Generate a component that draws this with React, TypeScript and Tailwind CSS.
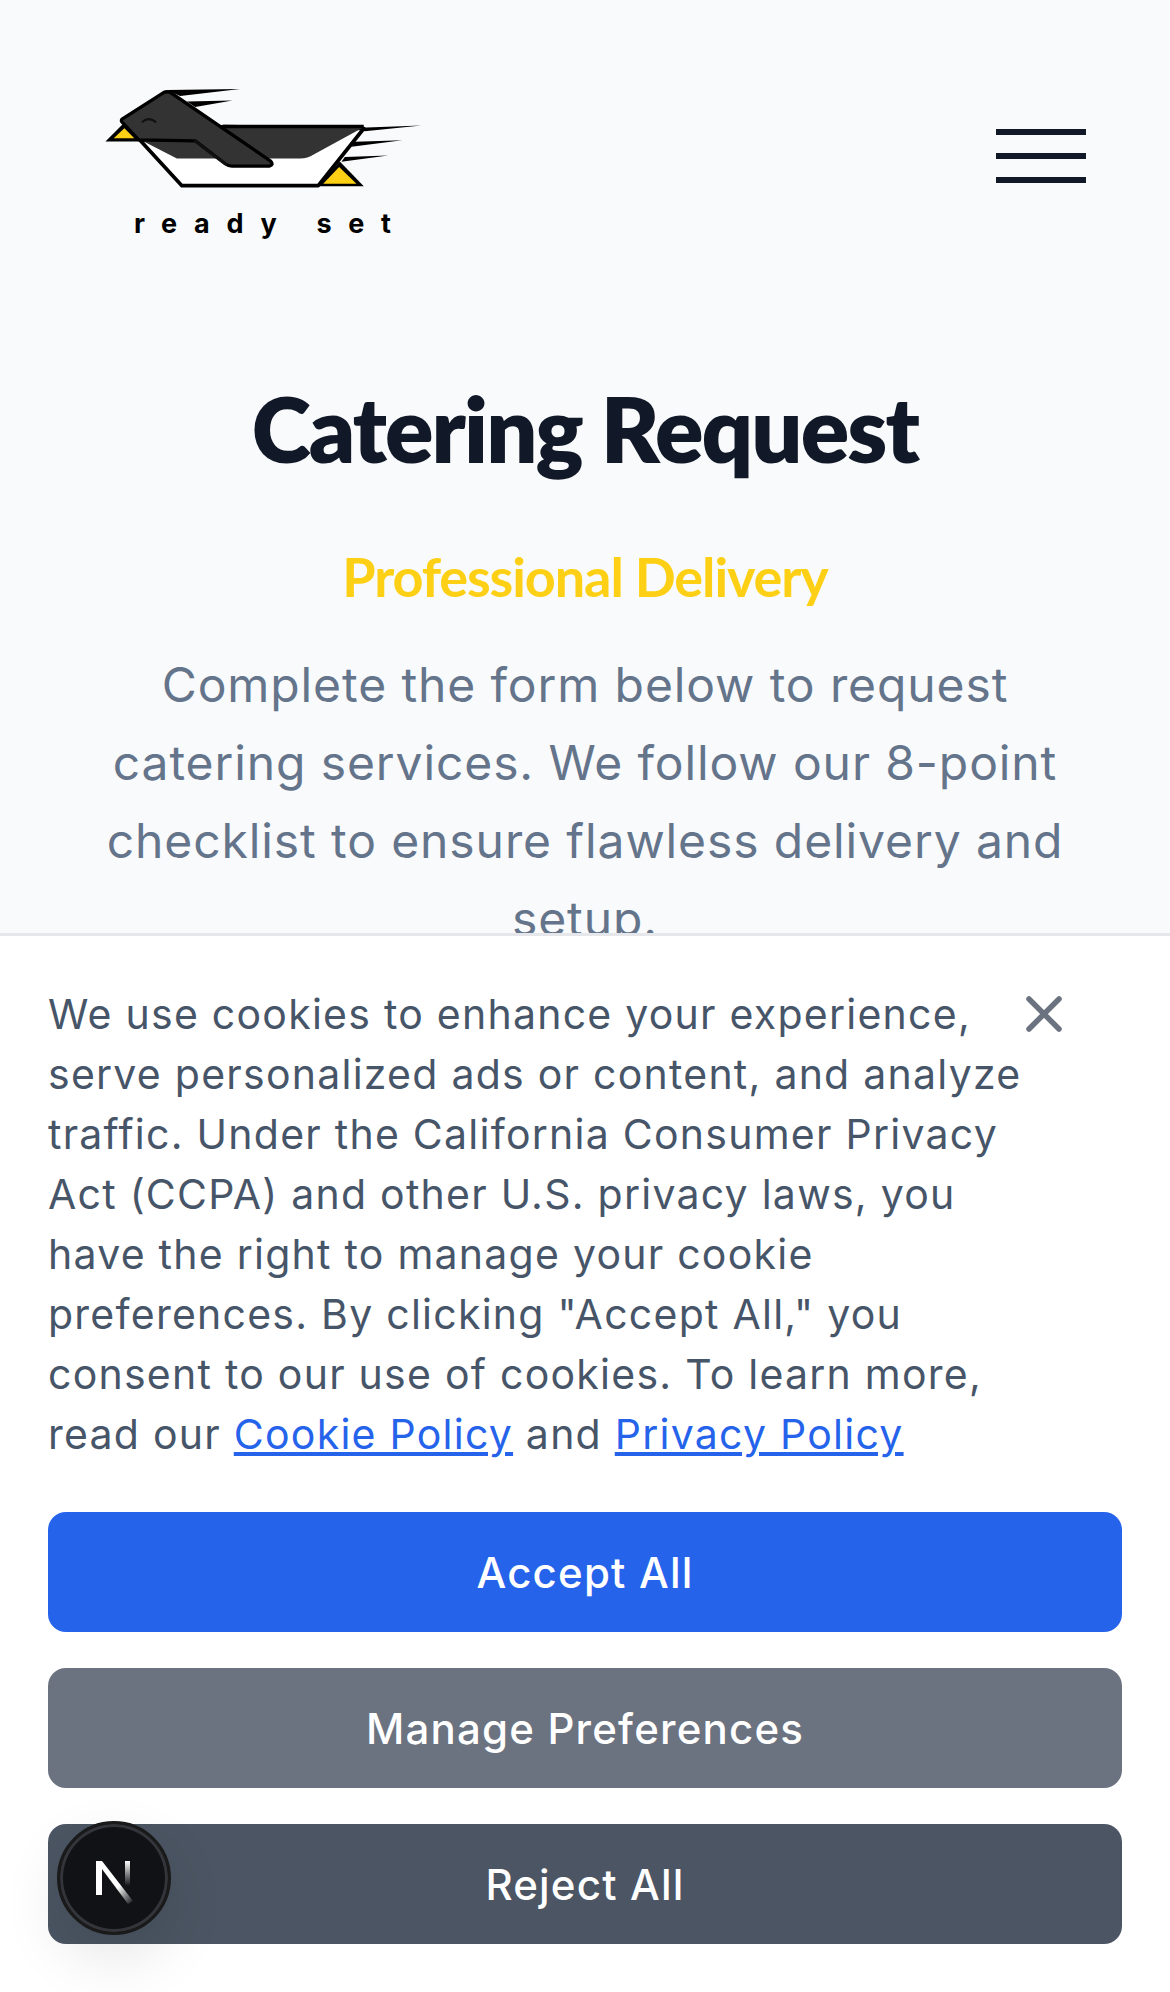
import { X } from "lucide-react";

function Logo() {
  return (
    <div className="flex w-[380px] flex-col">
      <svg viewBox="0 0 1140 400" className="h-[133px] w-[380px]">
        <path d="M260 90 L480 87 L300 108 Z" fill="#000" />
        <path d="M320 125 L457 122 L345 141 Z" fill="#000" />
        <path d="M840 204 L1025 197 L855 214 Z" fill="#000" />
        <path d="M825 246 L968 241 L815 261 Z" fill="#000" />
        <path d="M795 292 L925 287 L785 306 Z" fill="#000" />
        <path d="M75 245 L130 190 L175 245 Z" fill="#000" />
        <path d="M100 235 L132 205 L162 235 Z" fill="#fdd015" />
        <path d="M180 242 L305 378 L715 378 L852 206 L430 200 Z" fill="#fff" stroke="#000" strokeWidth="11" strokeLinejoin="round" />
        <path d="M430 203 L850 203 L700 285 Q685 296 660 296 L290 296 L180 240 L200 200 Z" fill="#333" />
        <path d="M430 200 L852 200" stroke="#000" strokeWidth="11" />
        <path d="M125 178 L250 98 Q262 92 274 100 L572 304 Q582 316 568 319 L455 319 Q445 319 435 312 L345 243 L175 240 L128 190 Q120 184 125 178 Z" fill="#333" stroke="#000" strokeWidth="10" strokeLinejoin="round" />
        <path d="M343 243 L440 315" stroke="#111" strokeWidth="8" fill="none" />
        <path d="M185 187 Q205 168 228 188" stroke="#111" strokeWidth="6" fill="none" />
        <path d="M712 380 L780 305 L852 380 Z" fill="#000" />
        <path d="M730 372 L778 322 L830 372 Z" fill="#fdd015" />
      </svg>
      <span className="mt-[13px] ml-[54px] whitespace-pre font-['Inter',sans-serif] text-[27px] leading-[36px] font-bold tracking-[16.7px] text-black">
        ready set
      </span>
    </div>
  );
}

export default function App() {
  return (
    <div className="relative h-[1992px] w-full overflow-hidden bg-[#f9fafb] font-['Inter',sans-serif]">
      <header className="flex items-start justify-between pt-[60px] pr-[84px] pl-[80px]">
        <Logo />
        <div className="mt-[69px] flex w-[90px] flex-col gap-[18px]">
          <span className="h-[6px] bg-[#111827]" />
          <span className="h-[6px] bg-[#111827]" />
          <span className="h-[6px] bg-[#111827]" />
        </div>
      </header>

      <section className="mt-[132px] flex flex-col items-center px-[96px] text-center">
        <h1 className="font-['Lato',sans-serif] text-[90px] leading-[108px] font-extrabold tracking-[-1.9px] text-[#111827]">
          Catering Request
        </h1>
        <h2 className="mt-[59px] font-['Lato',sans-serif] text-[54px] leading-[72px] font-bold tracking-[-1.1px] text-[#fdd015]">
          Professional Delivery
        </h2>
        <p className="mt-[33px] text-[48px] leading-[78px] tracking-[0.9px] text-[#64748b]">
          Complete the form below to request catering services. We follow our 8-point checklist to ensure flawless delivery and setup.
        </p>
      </section>

      <div className="absolute inset-x-0 bottom-0 border-t-[3px] border-[#e5e7eb] bg-white p-[48px]">
        <div className="flex items-start justify-between">
          <p className="w-[966px] whitespace-nowrap text-[41px] leading-[60px] tracking-[1.25px] text-[#475569]">
            We use cookies to enhance your experience,<br />
            serve personalized ads or content, and analyze<br />
            traffic. Under the California Consumer Privacy<br />
            Act (CCPA) and other U.S. privacy laws, you<br />
            have the right to manage your cookie<br />
            preferences. By clicking "Accept All," you<br />
            consent to our use of cookies. To learn more,<br />
            read our <a className="text-[#2563eb] underline">Cookie Policy</a> and{" "}
            <a className="text-[#2563eb] underline">Privacy Policy</a>
          </p>
          <button className="mr-[48px] shrink-0">
            <X size={60} strokeWidth={2.2} className="text-[#6b7280]" />
          </button>
        </div>
        <div className="mt-[48px] flex flex-col gap-[36px]">
          <button className="h-[120px] rounded-[18px] bg-[#2563eb] text-[42px] font-medium tracking-[1.2px] text-white">Accept All</button>
          <button className="h-[120px] rounded-[18px] bg-[#6b7280] text-[42px] font-medium tracking-[1.2px] text-white">Manage Preferences</button>
          <button className="h-[120px] rounded-[18px] bg-[#4b5563] text-[42px] font-medium tracking-[1.2px] text-white">Reject All</button>
        </div>
      </div>

      <div className="absolute top-[1821px] left-[57px] flex h-[114px] w-[114px] items-center justify-center rounded-full border-[3px] border-[#1a1a1a] bg-[#111216] shadow-[0_24px_60px_rgba(0,0,0,0.1),inset_0_0_0_3px_#33353a]">
        <svg viewBox="0 0 44 52" className="h-[52px] w-[44px]">
          <defs>
            <linearGradient id="nDiag" x1="0" y1="0" x2="1" y2="1">
              <stop offset="0.6" stopColor="#fff" />
              <stop offset="1" stopColor="#fff" stopOpacity="0" />
            </linearGradient>
            <linearGradient id="nStem" x1="0" y1="0" x2="0" y2="1">
              <stop offset="0" stopColor="#fff" />
              <stop offset="1" stopColor="#fff" stopOpacity="0" />
            </linearGradient>
          </defs>
          <path d="M4 9 H10 V43 H4 Z" fill="#fff" />
          <path d="M4 9 H10 L41 49 L36 52 Z" fill="url(#nDiag)" />
          <path d="M33 9 H38 V34 H33 Z" fill="url(#nStem)" />
        </svg>
      </div>
    </div>
  );
}
